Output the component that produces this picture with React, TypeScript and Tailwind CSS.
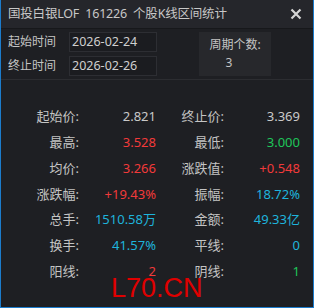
import React from 'react';

type Stat = { label: string; value: string; color: string };

const rows: [Stat, Stat][] = [
  [
    { label: '起始价:', value: '2.821', color: 'text-[#c9c9c9]' },
    { label: '终止价:', value: '3.369', color: 'text-[#c9c9c9]' },
  ],
  [
    { label: '最高:', value: '3.528', color: 'text-[#f23a3a]' },
    { label: '最低:', value: '3.000', color: 'text-[#1ec65a]' },
  ],
  [
    { label: '均价:', value: '3.266', color: 'text-[#f23a3a]' },
    { label: '涨跌值:', value: '+0.548', color: 'text-[#f23a3a]' },
  ],
  [
    { label: '涨跌幅:', value: '+19.43%', color: 'text-[#f23a3a]' },
    { label: '振幅:', value: '18.72%', color: 'text-[#1eb4dc]' },
  ],
  [
    { label: '总手:', value: '1510.58万', color: 'text-[#1eb4dc]' },
    { label: '金额:', value: '49.33亿', color: 'text-[#1eb4dc]' },
  ],
  [
    { label: '换手:', value: '41.57%', color: 'text-[#1eb4dc]' },
    { label: '平线:', value: '0', color: 'text-[#1eb4dc]' },
  ],
  [
    { label: '阳线:', value: '2', color: 'text-[#f23a3a]' },
    { label: '阴线:', value: '1', color: 'text-[#1ec65a]' },
  ],
];

const CloseIcon: React.FC = () => (
  <svg width="12" height="12" viewBox="0 0 12 12" fill="none" stroke="#d4d4d4" strokeWidth={2.2}>
    <path d="M1.5 1.5L10.5 10.5M10.5 1.5L1.5 10.5" />
  </svg>
);

export default function App() {
  return (
    <div
      className="relative w-[314px] h-[308px] bg-[#1e1f23] border-x border-b border-[#1c7ccc] flex flex-col overflow-hidden"
      style={{ fontFamily: '"Noto Sans", "Noto Sans CJK SC", sans-serif' }}
    >
      {/* Title bar */}
      <div className="h-[29px] shrink-0 flex items-center justify-between pl-[7px] pr-[11px] bg-[#25262b] border-b border-[#17181b]">
        <span className="text-[12.5px] text-[#c8c8c8] whitespace-pre tracking-[-0.2px]">国投白银LOF  161226  个股K线区间统计</span>
        <CloseIcon />
      </div>

      {/* Date range */}
      <div className="h-[51px] shrink-0 flex pt-[3px] pl-[7px] border-b border-[#2c2d31]">
        <div className="flex flex-col gap-[4px]">
          <div className="flex items-center h-[20px]">
            <span className="w-[61px] text-[12px] text-[#c4c4c4]">起始时间</span>
            <div className="w-[88px] h-[20px] border border-[#2d2e33] bg-[#1b1c20] pl-[2px] flex items-center text-[12.5px] text-[#cfcfcf]">
              2026-02-24
            </div>
          </div>
          <div className="flex items-center h-[20px]">
            <span className="w-[61px] text-[12px] text-[#c4c4c4]">终止时间</span>
            <div className="w-[88px] h-[20px] border border-[#2d2e33] bg-[#1b1c20] pl-[2px] flex items-center text-[12.5px] text-[#cfcfcf]">
              2026-02-26
            </div>
          </div>
        </div>
        <div className="ml-[42px] w-[72px] h-[44px] bg-[#27282c] flex flex-col items-center pt-[4px] text-[12px] text-[#c4c4c4] leading-[18px]">
          <span>周期个数:</span>
          <span className="mr-[12px]">3</span>
        </div>
      </div>

      {/* Stats */}
      <div className="pt-[24px] grid grid-cols-[78px_77px_68px_76px] text-[13px]">
        {rows.map((r, i) => (
          <React.Fragment key={i}>
            <div className="h-[25.8px] flex items-center justify-end text-[#c4c4c4]">{r[0].label}</div>
            <div className={`h-[25.8px] flex items-center justify-end ${r[0].color}`}>{r[0].value}</div>
            <div className="h-[25.8px] flex items-center justify-end text-[#c4c4c4]">{r[1].label}</div>
            <div className={`h-[25.8px] flex items-center justify-end ${r[1].color}`}>{r[1].value}</div>
          </React.Fragment>
        ))}
      </div>

      {/* Watermark */}
      <div
        className="absolute left-[110px] top-[275px] text-[27px] leading-none text-[#e00000]"
        style={{ fontFamily: '"Liberation Sans", Arial, sans-serif' }}
      >
        L70.CN
      </div>
    </div>
  );
}
